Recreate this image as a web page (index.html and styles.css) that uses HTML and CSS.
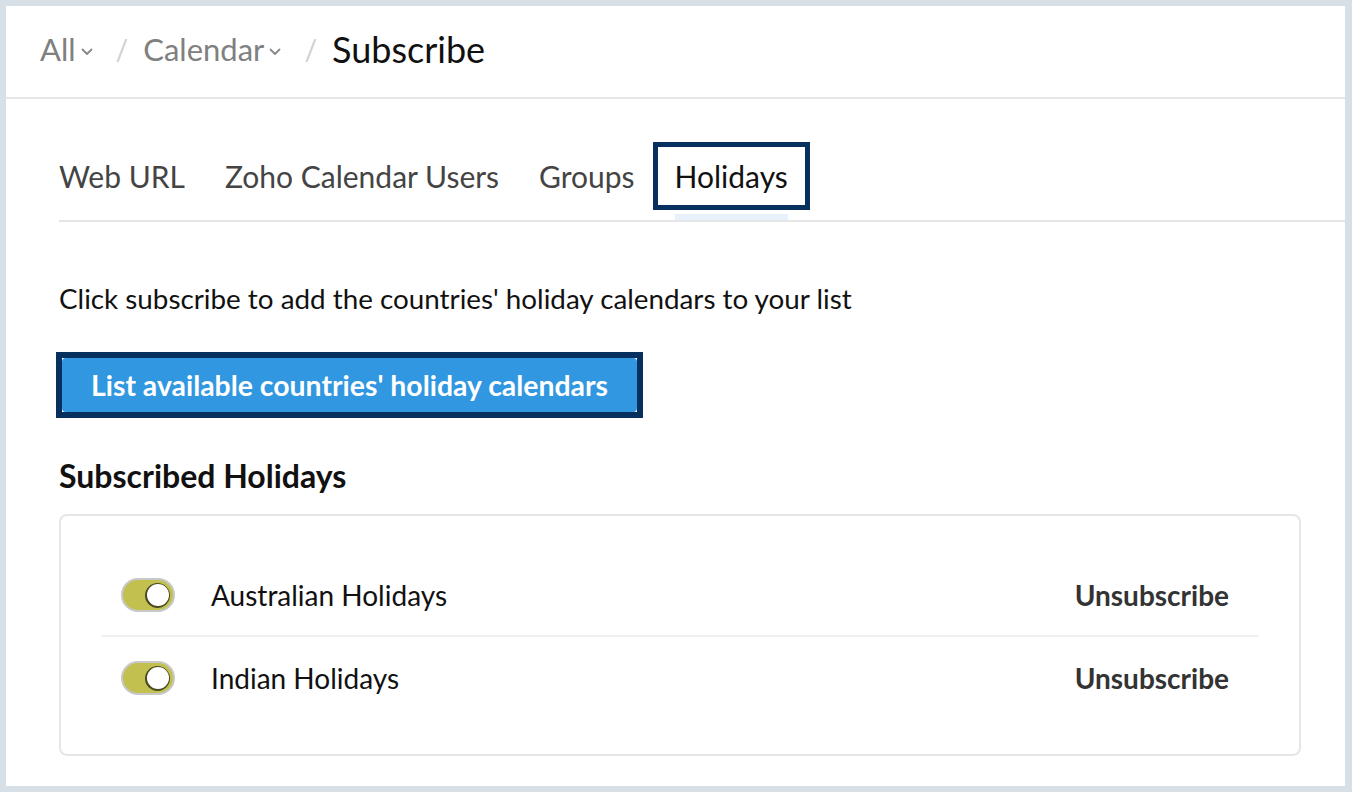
FILE: index.html
```html
<!DOCTYPE html>
<html>
<head>
<meta charset="utf-8">
<link rel="stylesheet" href="styles.css">
</head>
<body>
<div class="frame">
  <header class="crumbs">
    <span class="crumb">All<svg class="chev" viewBox="0 0 12 8" width="12" height="8"><path d="M1.5 1.5 L6 6 L10.5 1.5" fill="none" stroke="#888" stroke-width="1.8" stroke-linecap="round" stroke-linejoin="round"/></svg></span>
    <span class="sep">/</span>
    <span class="crumb">Calendar<svg class="chev" viewBox="0 0 12 8" width="12" height="8"><path d="M1.5 1.5 L6 6 L10.5 1.5" fill="none" stroke="#888" stroke-width="1.8" stroke-linecap="round" stroke-linejoin="round"/></svg></span>
    <span class="sep">/</span>
    <span class="current">Subscribe</span>
  </header>
  <main class="content">
    <nav class="tabs">
      <span class="tab">Web URL</span>
      <span class="tab">Zoho Calendar Users</span>
      <span class="tab">Groups</span>
      <span class="tab active">Holidays</span>
    </nav>
    <p class="desc">Click subscribe to add the countries' holiday calendars to your list</p>
    <div class="focus-ring"><button class="list-btn">List available countries' holiday calendars</button></div>
    <h2 class="sub-title">Subscribed Holidays</h2>
    <div class="card">
      <div class="row">
        <span class="toggle"><span class="knob"></span></span>
        <span class="name">Australian Holidays</span>
        <span class="unsub">Unsubscribe</span>
      </div>
      <div class="row">
        <span class="toggle"><span class="knob"></span></span>
        <span class="name">Indian Holidays</span>
        <span class="unsub">Unsubscribe</span>
      </div>
    </div>
  </main>
</div>
</body>
</html>
```
FILE: styles.css
```css
* { box-sizing: border-box; }
html, body { margin: 0; padding: 0; }
body {
  background: #d8e0e7;
  font-family: Lato, "Open Sans", sans-serif;
  width: 1352px;
  height: 792px;
  padding: 6px 7px 6px 6px;
}
.frame {
  background: #fff;
  height: 780px;
  overflow: hidden;
}
.crumbs {
  height: 93px;
  border-bottom: 2px solid #e6e6e6;
  display: flex;
  align-items: center;
  padding: 0 0 6px 34px;
  font-size: 31px;
}
.crumb { color: #808080; display: flex; align-items: center; }
.chev { margin-left: 5px; margin-top: 6px; }
.sep { color: #d0d0d0; margin: 0 15px 0 23px; font-size: 28px; }
.current { color: #111; font-size: 36px; }
.content { padding: 0 0 0 53px; }
.tabs {
  display: flex;
  align-items: stretch;
  margin-top: 43px;
  height: 80px;
  border-bottom: 2px solid #e6e6e6;
}
.tab {
  font-size: 30px;
  color: #444;
  height: 68px;
  display: flex;
  align-items: center;
  margin-right: 40px;
  position: relative;
}
.tab:nth-child(3) { margin-right: 18px; }
.tab.active {
  color: #111;
  border: 5px solid #08305f;
  padding: 0 17px;
  margin-right: 0;
}
.tab.active::after {
  content: "";
  position: absolute;
  left: 17px;
  right: 17px;
  bottom: -15px;
  height: 6px;
  background: #e6f1fc;
}
.desc {
  font-size: 27.8px;
  color: #111;
  margin: 60px 0 0 0;
  line-height: 34px;
}
.focus-ring {
  margin: 36px 0 0 -3px;
  width: 587px;
  height: 66px;
  border: 6px solid #08305f;
  background: #fff;
}
.list-btn {
  display: block;
  width: 575px;
  height: 54px;
  background: #3097e0;
  color: #fff;
  border: none;
  border-radius: 4px;
  font-family: Lato, sans-serif;
  font-weight: 700;
  font-size: 28.4px;
  padding: 0;
}
.sub-title {
  font-size: 32px;
  font-weight: 700;
  color: #111;
  margin: 39px 0 0 0;
  line-height: 38px;
}
.card {
  margin-top: 19px;
  width: 1242px;
  height: 242px;
  border: 2px solid #e6e6e6;
  border-radius: 8px;
  padding: 39px 40px 0 40px;
}
.row {
  display: flex;
  align-items: center;
  height: 82px;
  padding: 0 30px 0 20px;
}
.row:first-child { border-bottom: 2px solid #f0f0f0; }
.toggle {
  width: 54px;
  height: 34px;
  border-radius: 17px;
  background: #c2c04f;
  border: 2px solid #c8c8c8;
  position: relative;
  flex: none;
}
.knob {
  position: absolute;
  right: 4px;
  top: 4px;
  width: 22px;
  height: 22px;
  border-radius: 50%;
  background: #fff;
  box-shadow: -0.5px 0.5px 0 1.5px #4a4a22;
}
.name {
  font-size: 28px;
  color: #111;
  margin-left: 36px;
  flex: 1;
}
.unsub {
  font-size: 28px;
  font-weight: 700;
  color: #333;
}
```
